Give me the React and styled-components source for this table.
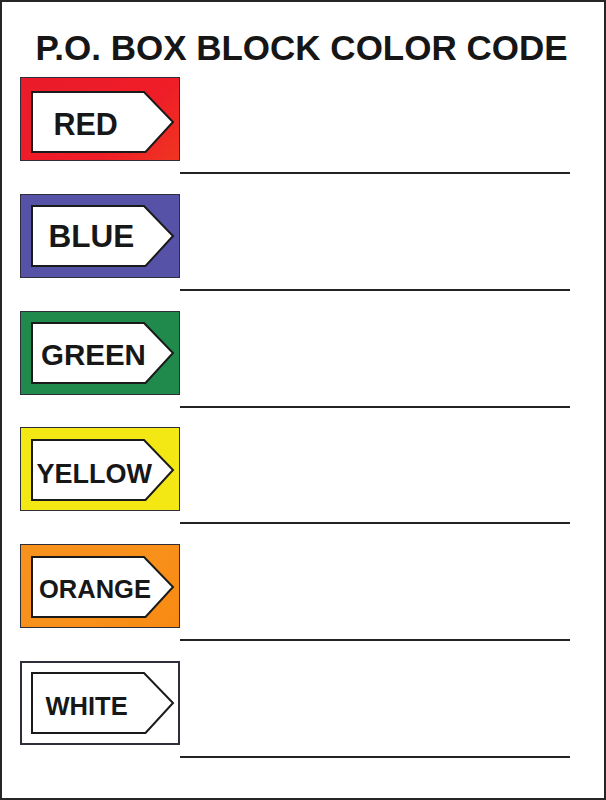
import React from "react";
import styled, { createGlobalStyle } from "styled-components";

const Global = createGlobalStyle`
  html, body { margin: 0; padding: 0; background: #ffffff; }
  body { font-family: "Liberation Sans", Arial, sans-serif; }
`;

const Frame = styled.div`
  width: 606px;
  height: 800px;
  box-sizing: border-box;
  border: 2px solid #262626;
  padding-top: 28px;
  background: #ffffff;
  display: flex;
  flex-direction: column;
`;

const Title = styled.h1`
  margin: 0;
  padding-right: 3px;
  text-align: center;
  font-family: "Liberation Sans", Arial, sans-serif;
  font-weight: 700;
  font-size: 35px;
  line-height: 1;
  color: #161616;
`;

const List = styled.div`
  display: grid;
  grid-auto-rows: 97px;
  row-gap: 19.8px;
  margin-top: 12px;
  padding-left: 18px;
`;

const Row = styled.div`
  display: flex;
  align-items: flex-start;
`;

const Swatch = styled.div`
  width: 160px;
  height: 84px;
  box-sizing: border-box;
  border: ${(p) => p.$bw}px solid #2e2e3a;
  background: ${(p) => p.$bg};
  padding-top: ${(p) => p.$inset - p.$bw}px;
  padding-left: ${(p) => 11 - p.$bw}px;
  display: flex;
  align-items: flex-start;
`;

const Tag = styled.div`
  position: relative;
  width: 143px;
  height: 62px;
  display: flex;
  align-items: center;
`;

const TagShape = styled.svg`
  position: absolute;
  left: 0;
  top: 0;
  width: 143px;
  height: 62px;
  overflow: visible;
`;

const Label = styled.span`
  position: relative;
  padding-left: ${(p) => p.$indent}px;
  padding-top: ${(p) => p.$drop}px;
  font-family: "Liberation Sans", Arial, sans-serif;
  font-weight: 700;
  font-size: ${(p) => p.$size}px;
  line-height: 1;
  color: #171717;
  white-space: nowrap;
`;

const WriteLine = styled.div`
  width: 390px;
  height: 2px;
  margin-top: 95px;
  background: #232323;
`;

const items = [
  { name: "RED", bg: "linear-gradient(135deg, #ec1b2b 0%, #ee1d27 65%, #f03522 100%)", size: 30.5, indent: 22.5, drop: 3.7, bw: 1, inset: 14 },
  { name: "BLUE", bg: "#5552a8", size: 31.5, indent: 17.5, drop: 0.7, bw: 1, inset: 11.5 },
  { name: "GREEN", bg: "#1f8a4c", size: 29.5, indent: 10, drop: 3.7, bw: 1, inset: 11.5 },
  { name: "YELLOW", bg: "#f4e814", size: 27, indent: 5.5, drop: 8.7, bw: 1, inset: 11.5 },
  { name: "ORANGE", bg: "linear-gradient(135deg, #f7921c 0%, #f8901a 60%, #f88a12 100%)", size: 25.5, indent: 8, drop: 6.7, bw: 1, inset: 11.5 },
  { name: "WHITE", bg: "#ffffff", size: 25.5, indent: 14.5, drop: 6.7, bw: 2, inset: 11.5 },
];

function ArrowTag({ children }) {
  return (
    <Tag>
      <TagShape viewBox="0 0 143 62" aria-hidden="true">
        <polygon
          points="1,1 113,1 142,31 114.5,61 1,61"
          fill="#ffffff"
          stroke="#1a1a1a"
          strokeWidth="2"
          strokeLinejoin="miter"
        />
      </TagShape>
      {children}
    </Tag>
  );
}

export default function App() {
  return (
    <>
      <Global />
      <Frame>
        <Title>P.O. BOX BLOCK COLOR CODE</Title>
        <List>
          {items.map((it) => (
            <Row key={it.name}>
              <Swatch $bg={it.bg} $bw={it.bw} $inset={it.inset}>
                <ArrowTag>
                  <Label $size={it.size} $indent={it.indent} $drop={it.drop}>
                    {it.name}
                  </Label>
                </ArrowTag>
              </Swatch>
              <WriteLine />
            </Row>
          ))}
        </List>
      </Frame>
    </>
  );
}
